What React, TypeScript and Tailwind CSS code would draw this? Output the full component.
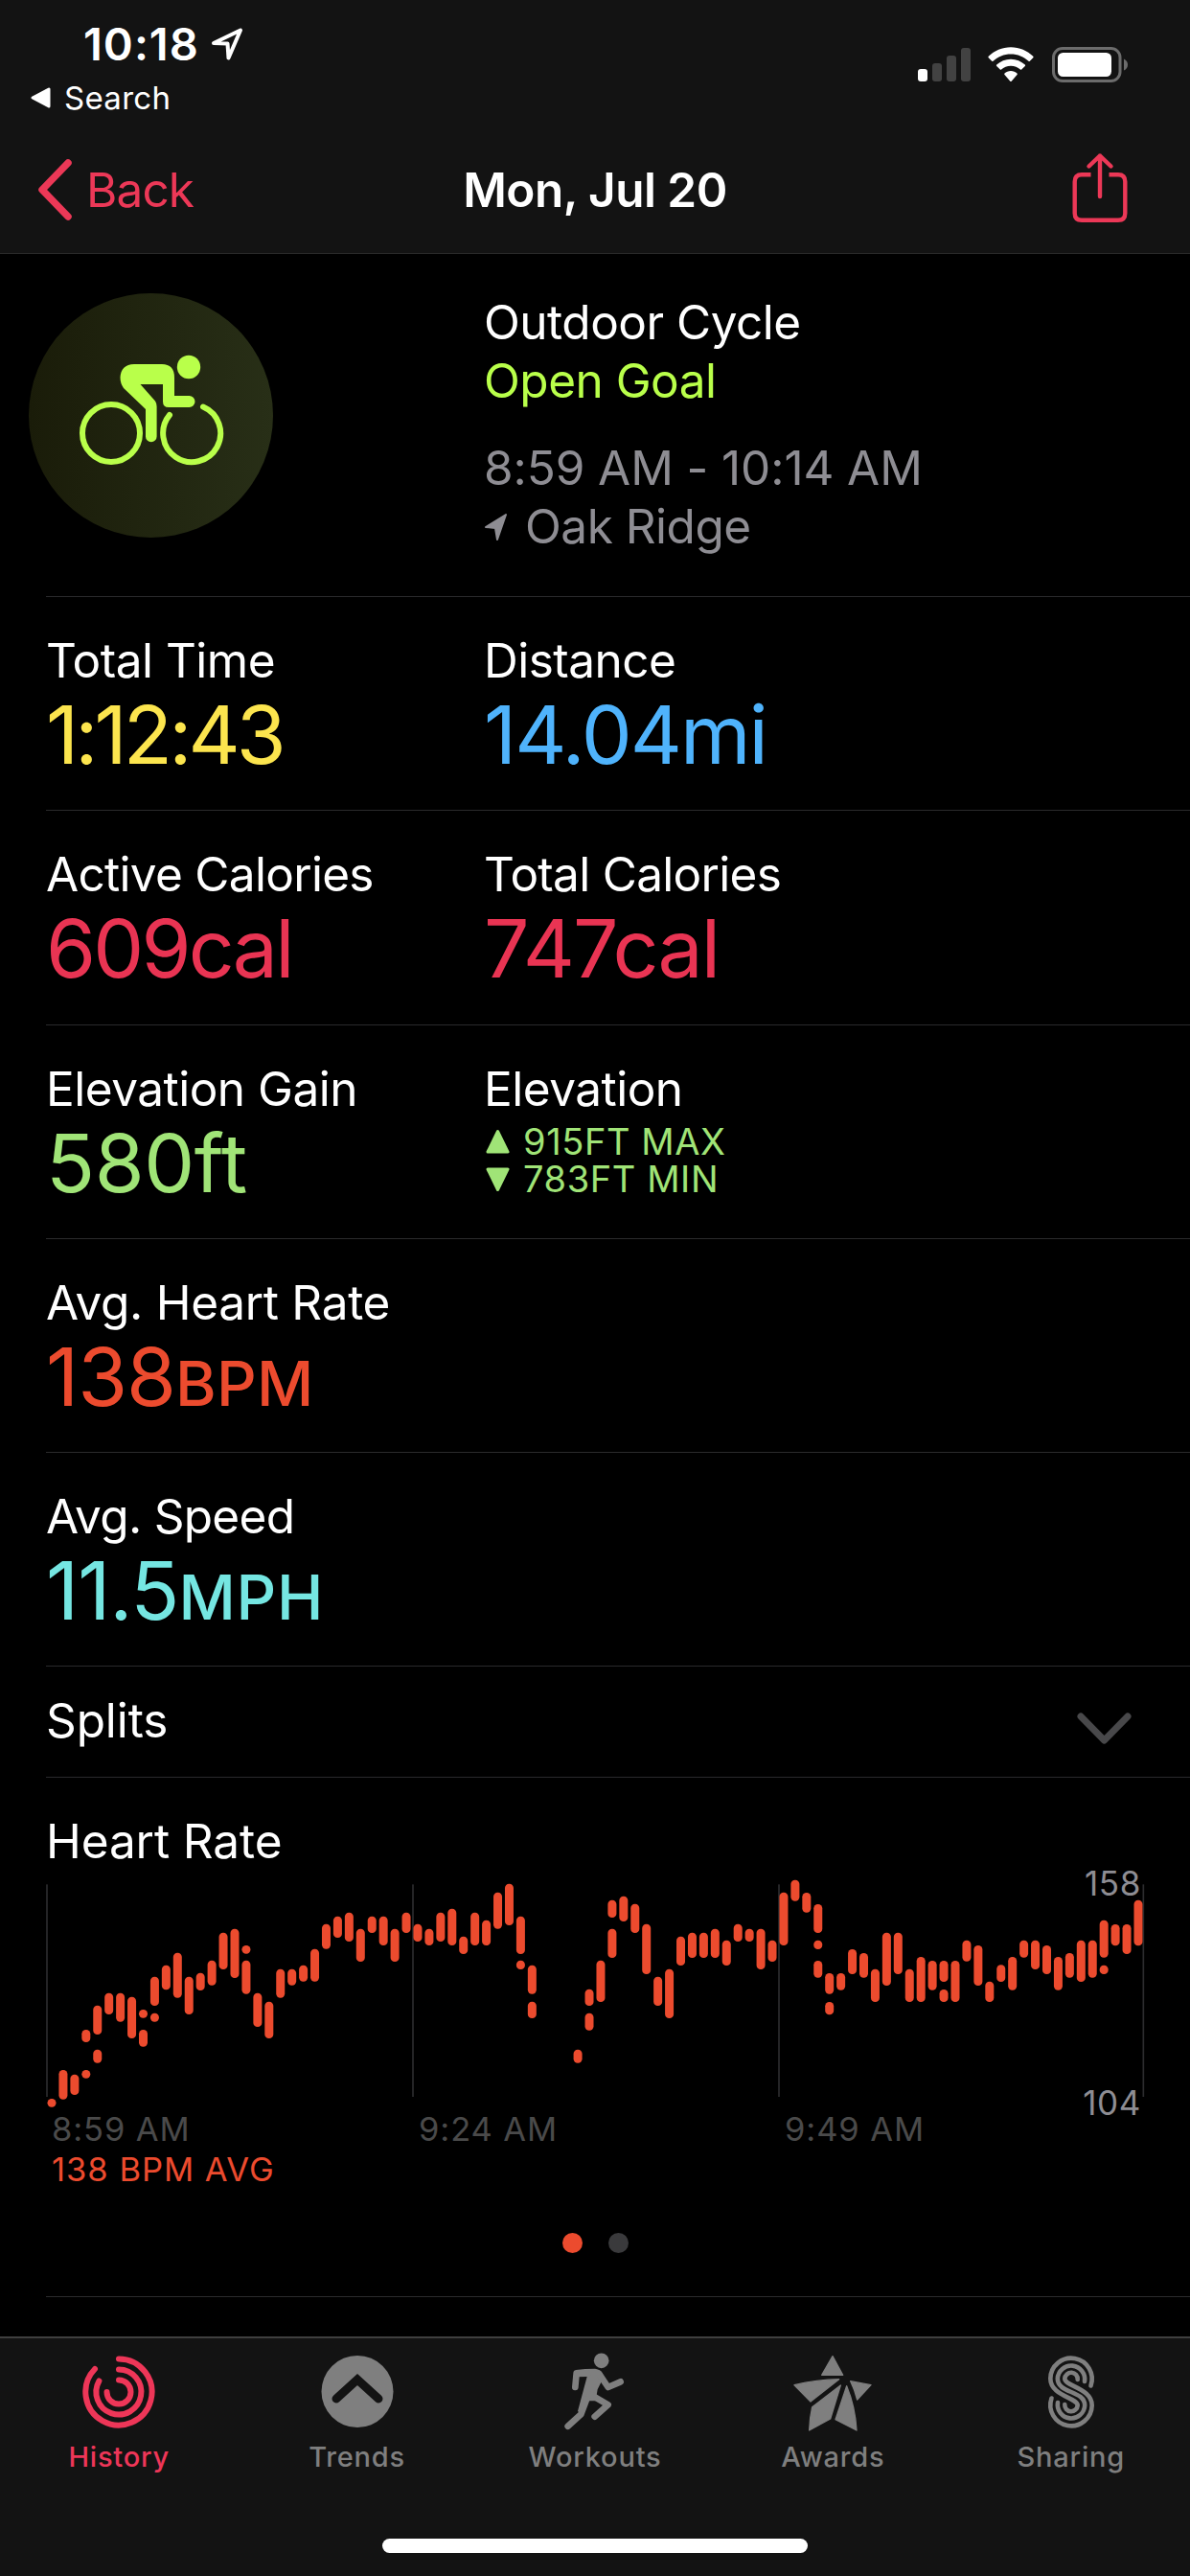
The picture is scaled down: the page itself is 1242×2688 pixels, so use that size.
import React from 'react';

// [column, top, bottom] in the chart's own units, three per pixel
const HEART_RATE: [number, number, number][] = [
  [0, 779, 805], [1, 689, 781], [2, 703, 767], [3, 563, 602], [3, 689, 715], [4, 487, 578], [4, 625, 667],
  [5, 448, 515], [6, 448, 538], [7, 460, 590], [8, 500, 526], [8, 563, 616], [9, 397, 488], [9, 511, 538],
  [10, 361, 438], [11, 322, 463], [12, 397, 515], [13, 385, 440], [14, 346, 424], [15, 259, 374],
  [16, 247, 401], [17, 299, 325], [17, 346, 451], [18, 448, 554], [19, 475, 590], [20, 373, 463],
  [21, 373, 424], [22, 361, 412], [23, 310, 412], [24, 232, 310], [25, 208, 275], [26, 196, 287],
  [27, 247, 350], [28, 208, 260], [29, 208, 299], [30, 247, 350], [31, 196, 260], [32, 232, 287],
  [33, 247, 299], [34, 196, 287], [35, 184, 299], [36, 271, 326], [37, 196, 299], [38, 220, 299],
  [39, 133, 247], [40, 106, 236], [41, 208, 326], [41, 346, 374], [42, 361, 451], [42, 475, 527],
  [46, 625, 667], [47, 436, 488], [47, 511, 565], [48, 346, 476], [49, 157, 212], [49, 247, 338],
  [50, 145, 224], [51, 169, 260], [52, 232, 389], [53, 397, 488], [54, 373, 527], [55, 271, 362],
  [56, 259, 338], [57, 259, 338], [58, 247, 338], [59, 283, 362], [60, 232, 287], [61, 247, 287],
  [62, 247, 374], [63, 283, 350], [64, 133, 299], [65, 94, 160], [66, 134, 196], [67, 170, 260],
  [67, 283, 311], [67, 347, 400], [68, 386, 451], [68, 476, 516], [69, 386, 439], [70, 311, 389],
  [71, 323, 400], [72, 373, 476], [73, 259, 425], [74, 259, 389], [75, 373, 476], [76, 335, 476],
  [77, 347, 439], [78, 347, 413], [78, 437, 476], [79, 347, 476], [80, 283, 349], [81, 299, 425],
  [82, 412, 476], [83, 360, 413], [84, 335, 439], [85, 283, 337], [86, 283, 374], [87, 299, 389],
  [88, 335, 439], [89, 323, 400], [90, 283, 413], [91, 283, 400], [92, 220, 337], [92, 361, 389],
  [93, 233, 300], [94, 233, 326], [95, 157, 300],
];

const SignalIcon = () => (
  <svg className="w-[55px] h-[37px]" viewBox="958 49 55 37">
    <rect x="958" y="72" width="10" height="13" rx="3" fill="#fff" />
    <rect x="973" y="66" width="10" height="19" rx="3" fill="#424242" />
    <rect x="988" y="58" width="10" height="27" rx="3" fill="#424242" />
    <rect x="1003" y="50" width="10" height="35" rx="3" fill="#424242" />
  </svg>
);

const WifiIcon = () => (
  <svg className="w-[48px] h-[37px]" viewBox="0 0 48 37" fill="#fff">
    <path d="M24 0.3C33 0.3 41.200 3.900 47.300 9.800Q48 10.500 47.300 11.300L43.800 14.800Q43.200 15.400 42.500 14.800C37.600 10.200 31.200 7.500 24 7.500S10.400 10.200 5.500 14.800Q4.800 15.400 4.200 14.800L0.700 11.300Q0 10.500 0.700 9.800C6.800 3.900 15 0.300 24 0.300Z" />
    <path d="M24 12.700C29.700 12.700 34.900 14.900 38.800 18.500Q39.500 19.200 38.800 19.900L35.200 23.500Q34.600 24.100 33.900 23.500C31.300 21.200 27.900 19.800 24 19.800S16.700 21.200 14.100 23.500Q13.400 24.100 12.800 23.500L9.200 19.900Q8.500 19.200 9.200 18.500C13.100 14.900 18.300 12.700 24 12.700Z" />
    <path d="M24 25C26.500 25 28.800 26 30.500 27.500Q31.200 28.200 30.500 28.900L24.700 35.700Q24 36.400 23.300 35.700L17.500 28.900Q16.800 28.200 17.500 27.500C19.200 26 21.500 25 24 25Z" />
  </svg>
);

const BatteryIcon = () => (
  <svg className="w-[80px] h-[37px]" viewBox="1098 49 80 37">
    <rect x="1099.500" y="50.500" width="69.500" height="34" rx="9.500" fill="none" stroke="#6c6c6c" strokeWidth="3" />
    <rect x="1104" y="55" width="56" height="25" rx="5.500" fill="#fff" />
    <path d="M1173 61.500Q1177 63.500 1177 67.500T1173 73.500Z" fill="#6c6c6c" />
  </svg>
);

const ShareIcon = () => (
  <svg className="w-[58px] h-[74px]" viewBox="1118.500 159 58 74" fill="none" stroke="#ec3857" strokeWidth="4.400" strokeLinejoin="round">
    <path d="M1138 182.200H1128.500Q1121.200 182.200 1121.200 189.500V222.500Q1121.200 229.800 1128.500 229.800H1166.500Q1173.800 229.800 1173.800 222.500V189.500Q1173.800 182.200 1166.500 182.200H1157" />
    <path d="M1147.500 205V162.500M1136 173.500L1147.500 162.500L1159 173.500" strokeLinecap="round" />
  </svg>
);

const CyclistIcon = () => (
  <svg className="-mt-[11px] w-[152px] h-[116px]" viewBox="82 370 152 116" fill="#b9ff4a">
    <circle cx="197" cy="383" r="12.200" />
    <path d="M140 380H169Q182 380 182 394V413H197.500A5.900 5.900 0 0 1 197.500 425H176Q170 425 170 419V401H146.500L162 418.500Q163.600 421 163.600 424V455.500A5.800 5.800 0 0 1 152 455.500V427L129 405Q125.500 400 125.500 394Q126 380.500 140 380Z" />
    <circle cx="116" cy="452" r="30" fill="none" stroke="#b9ff4a" strokeWidth="6" />
    <path d="M177 433A30 30 0 1 0 212 424.500" fill="none" stroke="#b9ff4a" strokeWidth="6" strokeLinecap="round" />
  </svg>
);

const HistoryIcon = () => (
  <svg className="w-[80px] h-[80px]" viewBox="-40 -40 80 80" fill="none" stroke="#ee3658" strokeWidth="6" strokeLinecap="round">
    <path d="M0 -34.600A34.600 34.600 0 1 1 -25 -24" />
    <path d="M0 -23.500A23.500 23.500 0 1 1 -20.600 -11.500" />
    <path d="M0 -12.500A12.500 12.500 0 1 1 -12.500 0" />
  </svg>
);

const TrendsIcon = () => (
  <svg className="w-[80px] h-[80px]" viewBox="-40 -40 80 80">
    <circle cy="-0.500" r="37.500" fill="#7f7f7f" />
    <path d="M-22 7L0 -13L22 7" fill="none" stroke="#131313" strokeWidth="9" strokeLinecap="round" />
  </svg>
);

const WorkoutsIcon = () => (
  <svg className="w-[80px] h-[84px]" viewBox="32 42 240 252" fill="#7f7f7f">
    <circle cx="172" cy="70" r="23.500" />
    <path d="M92 99Q120 95 152 95Q166 96 174 108L180 120L160 160L154 196L120 196L107 236L98 228L127 120L98 121Z" />
    <path d="M90 153L94 109H130M164 110L193 153L232 136M138 176L193 208L151 245M126 190L108 238L67 275" fill="none" stroke="#7f7f7f" strokeWidth="20" strokeLinecap="round" strokeLinejoin="round" />
  </svg>
);

const AwardsIcon = () => (
  <svg className="w-[84px] h-[84px]" viewBox="768 42 252 252" fill="#7f7f7f" stroke="#7f7f7f" strokeWidth="4" strokeLinejoin="round">
    <path d="M894 56L926 115H860Z" />
    <path d="M774 146Q845 129 914 128L825 198Z" />
    <path d="M830 215L919 147L887 252L821 288Q822 250 830 215Z" />
    <path d="M938 149Q965 215 969 288L903 254Z" />
    <path d="M950 134L1014 146L971 192Q963 160 950 134Z" />
  </svg>
);

const SharingIcon = () => (
  <svg className="w-[80px] h-[80px]" viewBox="-40 -40 80 80" fill="none" stroke="#7f7f7f" strokeWidth="4.600" strokeLinecap="round">
    <path d="M20.500 -6.500A21.700 21.700 0 1 0 -21.700 -14C-21.700 4 6.700 6 6.700 14A6.700 6.700 0 1 1 -6.700 13" />
    <path d="M14 -11A14.200 14.200 0 1 0 -14.200 -14C-14.200 2 14.200 -2 14.200 14A14.200 14.200 0 1 1 -14 11" />
    <path d="M6.700 -13A6.700 6.700 0 1 0 -6.700 -14C-6.700 -6 21.700 -4 21.700 14A21.700 21.700 0 1 1 -20.500 6.500" />
  </svg>
);

interface MetricProps {
  label: string;
  labelClassName?: string;
  children: React.ReactNode;
}

const Metric: React.FC<MetricProps> = ({ label, labelClassName = 'tracking-[-0.5px]', children }) => (
  <div>
    <div className={`text-[49.5px] leading-[60px] text-white ${labelClassName}`}>{label}</div>
    {children}
  </div>
);

const MetricRow: React.FC<{ children: React.ReactNode }> = ({ children }) => (
  <section className="grid h-[223.3px] grid-cols-[457px_1fr] border-b border-[#2a2a2c] pt-[36px]">{children}</section>
);

const Header = () => (
  <header className="h-[265px] border-b border-[#2a2a2a] bg-[#131313]">
    <div className="flex h-[130px] items-start justify-between pl-[31px] pr-[64px]">
      <div className="pt-4 text-white">
        <div className="flex items-center pl-[56px] text-[47px] leading-[60px] font-semibold tracking-[1px]">
          10:18
          <svg className="ml-[11px] h-[36px] w-[36px]" viewBox="0 0 36 36" fill="none" stroke="#fff" strokeWidth="4" strokeLinejoin="round">
            <path d="M4 17L32 3.500L19.500 32.500L18.500 17.500Z" />
          </svg>
        </div>
        <div className="flex items-center text-[33px] leading-[52px] tracking-[0.3px]">
          <svg className="mr-[14px] h-[24px] w-[22px]" viewBox="0 0 22 24" fill="#fff" stroke="#fff" strokeWidth="3" strokeLinejoin="round">
            <path d="M3 12L20 3V21Z" />
          </svg>
          Search
        </div>
      </div>
      <div className="flex items-center pt-[49px]">
        <SignalIcon />
        <span className="ml-[18px]"><WifiIcon /></span>
        <span className="ml-[19px]"><BatteryIcon /></span>
      </div>
    </div>
    <nav className="grid h-[134px] grid-cols-[1fr_auto_1fr] items-center px-[38px] pt-[2px]">
      <button className="flex items-center text-[49.5px] tracking-[-0.9px] text-[#ec3857]">
        <svg className="mr-[14px] h-[66px] w-[38px]" viewBox="0 0 38 66" fill="none" stroke="#ec3857" strokeWidth="7.500" strokeLinecap="round" strokeLinejoin="round">
          <path d="M33 5L6 33L33 61" />
        </svg>
        Back
      </button>
      <h1 className="text-[49.5px] font-semibold tracking-[-0.5px] text-white">Mon, Jul 20</h1>
      <button className="mr-[27px] mb-[5px] justify-self-end"><ShareIcon /></button>
    </nav>
  </header>
);

const Summary = () => (
  <section className="ml-12 grid h-[358px] grid-cols-[457px_1fr] border-b border-[#2a2a2c]">
    <div className="mt-[41px] -ml-[18px] flex h-[255px] w-[255px] items-center justify-center rounded-full bg-linear-to-r from-[#1a1c09] to-[#282f17]">
      <CyclistIcon />
    </div>
    <div className="pt-[41px] text-[49.5px] leading-[61px] tracking-[-0.5px]">
      <div className="text-white">Outdoor Cycle</div>
      <div className="text-[#b9ff4a]">Open Goal</div>
      <div className="mt-[30px] tracking-[-0.1px] text-[#8e8d93]">8:59 AM - 10:14 AM</div>
      <div className="flex items-center text-[#8e8d93]">
        <svg className="mr-[18px] h-[30px] w-[25px]" viewBox="0 0 25 30" fill="#8e8d93" stroke="#8e8d93" strokeWidth="2" strokeLinejoin="round">
          <path d="M2 15L23 2L14 28L12 16Z" />
        </svg>
        Oak Ridge
      </div>
    </div>
  </section>
);

const HeartRateChart = () => (
  <div className="relative">
    <svg className="ml-12 h-[250px] w-[1194px]" viewBox="144 80 3582 750">
      {[147, 1293, 2439, 3580].map(x => (
        <rect key={x} x={x - 2.5} y="108" width="5" height="665" fill="#2c2c2e" />
      ))}
      {HEART_RATE.map(([col, top, bottom]) => (
        <rect key={`${col}-${top}`} x={162 + col * 35.81 - 13.5} y={top} width="27" height={bottom - top} rx="13" fill="#ec4b2e" />
      ))}
    </svg>
    <div className="absolute top-[-12px] right-[51px] text-[35px] leading-[40px] tracking-[0.6px] text-[#8e8d93]">158</div>
    <div className="absolute top-[217px] right-[51px] text-[35px] leading-[40px] tracking-[0.6px] text-[#8e8d93]">104</div>
  </div>
);

interface TabProps {
  label: string;
  active?: boolean;
  children: React.ReactNode;
}

const Tab: React.FC<TabProps> = ({ label, active, children }) => (
  <button className={`flex flex-col items-center ${active ? 'text-[#ee3658]' : 'text-[#7f7f7f]'}`}>
    <span className="flex h-[84px] items-center">{children}</span>
    <span className="mt-[8px] text-[29px] leading-[36px] font-medium tracking-[0.8px]">{label}</span>
  </button>
);

const App: React.FC = () => {
  return (
    <div className="flex h-[2688px] w-[1242px] flex-col overflow-hidden bg-black font-['Inter','Liberation_Sans',sans-serif]">
      <Header />
      <Summary />
      <main className="ml-12">
        <MetricRow>
          <Metric label="Total Time">
            <div className="mt-[3px] text-[84px] leading-[90px] tracking-[-3.9px] text-[#fce54e]">1:12:43</div>
          </Metric>
          <Metric label="Distance">
            <div className="mt-[3px] text-[84px] leading-[90px] tracking-[-2px] text-[#4fb3fc]">14.04mi</div>
          </Metric>
        </MetricRow>
        <MetricRow>
          <Metric label="Active Calories" labelClassName="tracking-[-0.7px]">
            <div className="mt-[3px] text-[84px] leading-[90px] tracking-[-2.8px] text-[#e93453]">609cal</div>
          </Metric>
          <Metric label="Total Calories" labelClassName="tracking-[-0.7px]">
            <div className="mt-[3px] text-[84px] leading-[90px] tracking-[-1.9px] text-[#e93453]">747cal</div>
          </Metric>
        </MetricRow>
        <MetricRow>
          <Metric label="Elevation Gain">
            <div className="mt-[3px] text-[84px] leading-[90px] tracking-[-0.4px] text-[#a0e477]">580ft</div>
          </Metric>
          <Metric label="Elevation">
            <div className="mt-[6px] text-[38px] leading-[39.5px] tracking-[0.6px] text-[#a0e477]">
              <div className="flex items-center">
                <svg className="mr-[14px] ml-[2px] h-[26px] w-[25px]" viewBox="0 0 25 26" fill="#a0e477" stroke="#a0e477" strokeWidth="3" strokeLinejoin="round">
                  <path d="M12.500 2.500L23 24H2Z" />
                </svg>
                915FT MAX
              </div>
              <div className="flex items-center">
                <svg className="mr-[14px] ml-[2px] h-[26px] w-[25px]" viewBox="0 0 25 26" fill="#a0e477" stroke="#a0e477" strokeWidth="3" strokeLinejoin="round">
                  <path d="M12.500 23.500L23 2H2Z" />
                </svg>
                783FT MIN
              </div>
            </div>
          </Metric>
        </MetricRow>
        <MetricRow>
          <Metric label="Avg. Heart Rate" labelClassName="tracking-[-0.3px]">
            <div className="mt-[3px] text-[84px] leading-[90px] tracking-[-1px] text-[#ec4b2e]">
              138<span className="text-[65px] font-medium tracking-[0.3px]">BPM</span>
            </div>
          </Metric>
        </MetricRow>
        <MetricRow>
          <Metric label="Avg. Speed" labelClassName="tracking-[-0.7px]">
            <div className="mt-[3px] text-[84px] leading-[90px] tracking-[-1px] text-[#75e6e2]">
              11.5<span className="text-[65px] font-medium tracking-[0.8px]">MPH</span>
            </div>
          </Metric>
        </MetricRow>
        <section className="flex h-[116px] items-center justify-between border-b border-[#2a2a2c] pr-[59px]">
          <div className="mb-[4px] text-[49.5px] tracking-[-0.1px] text-white">Splits</div>
          <svg className="mt-[15px] h-[36px] w-[60px]" viewBox="0 0 60 36" fill="none" stroke="#48484a" strokeWidth="7" strokeLinecap="round" strokeLinejoin="round">
            <path d="M5 5L29.500 30L54 5" />
          </svg>
        </section>
      </main>
      <section className="flex flex-col">
        <h2 className="mt-[36px] ml-12 text-[49.5px] leading-[60px] tracking-[-0.1px] text-white">Heart Rate</h2>
        <div className="mt-[6px]"><HeartRateChart /></div>
        <div className="-mt-[6px] ml-[54px] grid grid-cols-[383px_382px_1fr] text-[34.5px] leading-[42px] tracking-[0.9px] text-[#4a4a4a]">
          <span>8:59 AM</span>
          <span>9:24 AM</span>
          <span>9:49 AM</span>
        </div>
        <div className="ml-[54px] text-[34.5px] leading-[42px] tracking-[1px] text-[#ec4b2e]">138 BPM AVG</div>
        <div className="mt-[45px] flex justify-center gap-[27px]">
          <span className="h-[21px] w-[21px] rounded-full bg-[#ec4b2e]" />
          <span className="h-[21px] w-[21px] rounded-full bg-[#3a3a3c]" />
        </div>
        <div className="mt-[45px] ml-12 border-b border-[#2a2a2c]" />
      </section>
      <footer className="mt-auto flex h-[250px] flex-col items-center border-t-2 border-[#3f3f3f] bg-[#131313]">
        <nav className="grid w-full grid-cols-5 pt-[14px]">
          <Tab label="History" active><HistoryIcon /></Tab>
          <Tab label="Trends"><TrendsIcon /></Tab>
          <Tab label="Workouts"><WorkoutsIcon /></Tab>
          <Tab label="Awards"><AwardsIcon /></Tab>
          <Tab label="Sharing"><SharingIcon /></Tab>
        </nav>
        <div className="mt-auto mb-[24px] h-[15px] w-[444px] rounded-full bg-white" />
      </footer>
    </div>
  );
};

export default App;
